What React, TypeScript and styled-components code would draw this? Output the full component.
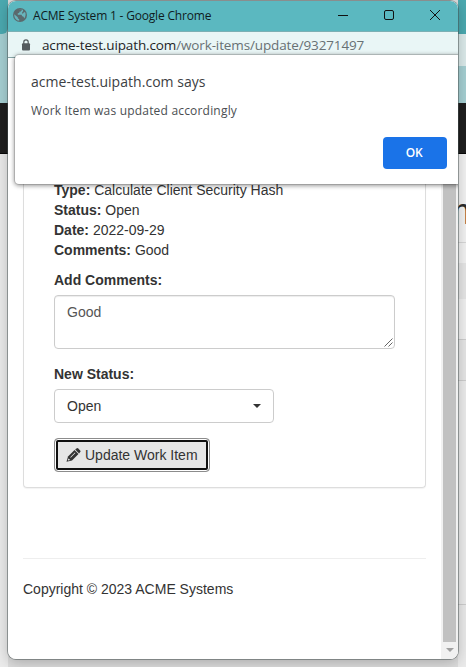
import React from "react";
import styled, { createGlobalStyle } from "styled-components";

const Global = createGlobalStyle`
  * { box-sizing: border-box; }
  body { margin: 0; overflow: hidden; }
`;

const Desktop = styled.div`
  position: relative;
  width: 466px;
  height: 667px;
  overflow: hidden;
  background: #a6d0d3;
`;

const Backdrop = styled.div`
  height: 667px;
  display: grid;
  grid-template-columns: 8px 1fr 8px;
`;

const Strip = styled.div`
  display: flex;
  flex-direction: column;
  overflow: hidden;
`;

const Band = styled.div<{ $h: number; $bg: string; $line?: string; $round?: boolean }>`
  flex: none;
  height: ${(p) => p.$h}px;
  background: ${(p) => p.$bg};
  border-bottom: ${(p) => (p.$line ? `1px solid ${p.$line}` : "none")};
  border-bottom-right-radius: ${(p) => (p.$round ? 6 : 0)}px;
`;

const HeadingBand = styled(Band)`
  padding-top: 38px;
  overflow: hidden;
  font: 36px/40px "Liberation Sans", Arial, sans-serif;
  color: #2b2b2b;
  text-indent: -6px;
`;

const Window = styled.div`
  position: absolute;
  left: 8px;
  top: 1px;
  width: 450px;
  height: 658px;
  display: flex;
  flex-direction: column;
  overflow: hidden;
  border-radius: 8px;
  background: #fff;
`;

const WindowShadow = styled.div`
  position: absolute;
  left: 8px;
  top: 1px;
  width: 450px;
  height: 658px;
  border-radius: 8px;
  box-shadow: 0 0 0 1px rgba(70, 80, 80, 0.5), 0 3px 14px rgba(0, 0, 0, 0.24);
`;

const TitleBar = styled.div`
  flex: none;
  height: 31px;
  display: flex;
  align-items: center;
  padding: 0 17px 2px 5px;
  background: #5bb8c0;
  border-bottom: 1px solid #7cb0b4;
`;

const Title = styled.span`
  margin-left: 6px;
  padding-top: 1px;
  flex: 1;
  font: 12px/16px "Open Sans", "Segoe UI", sans-serif;
  letter-spacing: -0.19px;
  color: #101c1e;
  white-space: nowrap;
`;

const Controls = styled.div`
  display: flex;
  gap: 34px;
`;

const AddressBar = styled.div`
  flex: none;
  height: 26px;
  display: flex;
  align-items: center;
  padding-left: 13px;
  background: #e9f6f6;
  border-bottom: 1px solid #87a5a7;
`;

const Url = styled.span`
  margin-left: 11px;
  font: 13.5px/20px "Open Sans", "Segoe UI", sans-serif;
  letter-spacing: -0.13px;
  color: #1e2526;
  white-space: nowrap;
`;

const UrlPath = styled.span`
  color: #687174;
`;

const Viewport = styled.div`
  flex: 1;
  display: flex;
`;

const Page = styled.main`
  flex: 1;
  padding: 0 15px;
  font: 14px/20px "Liberation Sans", Arial, sans-serif;
  color: #333;
`;

const Panel = styled.section`
  height: 430px;
  padding: 122px 30px 0;
  border: 1px solid #ddd;
  border-top: none;
  border-radius: 0 0 4px 4px;
  box-shadow: 0 1px 1px rgba(0, 0, 0, 0.05);
`;

const Details = styled.div`
  margin-bottom: 10px;
`;

const Detail = styled.div`
  height: 20px;
  white-space: nowrap;
`;

const Label = styled.label`
  display: block;
  margin-bottom: 5px;
  font-weight: bold;
`;

const Comment = styled.div`
  display: flex;
  width: 341px;
  height: 54px;
  margin-bottom: 15px;
  padding: 6px 12px;
  border: 1px solid #ccc;
  border-radius: 4px;
  box-shadow: inset 0 1px 1px rgba(0, 0, 0, 0.075);
  color: #555;
`;

const Grip = styled.svg`
  margin: auto -11px -5px auto;
`;

const Select = styled.div`
  display: flex;
  align-items: center;
  justify-content: space-between;
  width: 220px;
  height: 34px;
  margin-bottom: 15px;
  padding: 0 12px;
  border: 1px solid #ccc;
  border-radius: 4px;
`;

const Caret = styled.span`
  border: 4px solid transparent;
  border-top-color: #333;
  border-bottom: none;
`;

const UpdateButton = styled.button`
  display: flex;
  align-items: center;
  width: 156px;
  height: 34px;
  padding: 0 0 0 11px;
  border: 1px solid #8c8c8c;
  border-radius: 4px;
  background: #e6e6e6;
  box-shadow: inset 0 0 0 1px #fff, inset 0 0 0 3px #101010;
  color: #333;
  font: inherit;
  white-space: nowrap;
`;

const ButtonText = styled.span`
  margin-left: 4px;
`;

const Footer = styled.footer`
  margin-top: 70px;
  padding-top: 20px;
  border-top: 1px solid #eee;
`;

const Scrollbar = styled.div`
  width: 17px;
  display: flex;
  flex-direction: column;
  align-items: center;
  background: #f1f1f1;
`;

const Thumb = styled.div`
  width: 13px;
  height: 584px;
  background: #c1c1c1;
`;

const ScrollArrow = styled.span`
  margin-top: 6px;
  border: 4px solid transparent;
  border-top-color: #a0a0a0;
  border-bottom: none;
`;

const Dialog = styled.div`
  position: absolute;
  left: 7px;
  top: 54px;
  width: 448px;
  height: 129px;
  display: flex;
  flex-direction: column;
  padding: 17px 16px 15px;
  border-radius: 4px;
  background: #fff;
  box-shadow: 0 0 0 1px rgba(0, 0, 0, 0.12), 0 1px 4px 1px rgba(0, 0, 0, 0.38);
  white-space: nowrap;
`;

const DialogTitle = styled.div`
  font: 14px/20px "Open Sans", "Segoe UI", sans-serif;
  letter-spacing: 0.04px;
  color: #3c4043;
`;

const DialogText = styled.div`
  margin-top: 10px;
  font: 12px/18px "Open Sans", "Segoe UI", sans-serif;
  letter-spacing: 0.19px;
  color: #4a4e52;
`;

const OkButton = styled.button`
  width: 64px;
  height: 32px;
  margin: auto 0 0 352px;
  padding: 0 2px 0 0;
  border: none;
  border-radius: 4px;
  background: #1a73e8;
  color: #fff;
  font: 600 12px/30px "Open Sans", "Segoe UI", sans-serif;
  letter-spacing: -0.3px;
`;

const details = [
  ["Type:", "Calculate Client Security Hash"],
  ["Status:", "Open"],
  ["Date:", "2022-09-29"],
  ["Comments:", "Good"],
];

const Globe = () => (
  <svg width="14" height="14" viewBox="0 0 14 14">
    <circle cx="7" cy="7" r="7" fill="#5a6a6e" />
    <path
      d="M1.2 6.2 4.8 9.2V10.2L6.2 11.3V12.8C3.2 12.4 1.2 10 1.2 6.2ZM5.2 1.5 8.8 1.4V2.2L7.8 3.5 6.3 3.7V5L4.8 5.3V6.8H8.5L9.3 8.3 10.6 8.7 11.2 10.5C12.6 8.8 13.2 6 12 4L10.8 4.5 9.8 5.8 8.8 5 10 3.2V1.8Z"
      fill="#68b4bc"
    />
  </svg>
);

const Lock = () => (
  <svg width="10" height="12" viewBox="0 0 10 12">
    <rect x="1" y="4.2" width="8" height="7.3" rx="1" fill="#555b5e" />
    <path d="M2.8 5V3a2.2 2.2 0 0 1 4.4 0v2" fill="none" stroke="#555b5e" strokeWidth="1.2" />
  </svg>
);

const Pencil = () => (
  <svg width="15" height="14" viewBox="0 0 15 14">
    <path d="M0.5 13.7 2 8.6 8.5 2.1 12.5 6.1 6 12.5Z" fill="#333" />
    <path d="M9.2 1.5 10.5.4Q11.4-.2 12.2.4L14.2 2.4Q14.9 3.2 14.2 4.1L13.1 5.4Z" fill="#333" />
    <path d="M2.6 10.4 4.1 11.9 2.2 12.5 1.8 12.1ZM4.2 9.2 8.9 4.5 9.4 5 4.7 9.7Z" fill="#e6e6e6" />
  </svg>
);

export default function App() {
  return (
    <Desktop>
      <Global />
      <Backdrop>
        <Strip>
          <Band $h={34} $bg="#4ba9b0" $round />
          <Band $h={69} $bg="#a6d0d3" />
          <Band $h={51} $bg="#1f1f1f" $line="#080808" />
          <Band $h={513} $bg="#ebebeb" />
        </Strip>
        <Strip>
          <Band $h={667} $bg="#dcdcdc" />
        </Strip>
        <Strip>
          <Band $h={34} $bg="#4ba9b0" />
          <Band $h={32} $bg="#dcebeb" />
          <Band $h={37} $bg="#a6d0d3" />
          <Band $h={51} $bg="#1f1f1f" $line="#080808" />
          <HeadingBand $h={89} $bg="#f3f3f3" $line="#d8d8d8">m</HeadingBand>
          <Band $h={20} $bg="#f3f3f3" />
          <Band $h={36} $bg="#e6e6e6" />
          <Band $h={41} $bg="#f1f1f1" $line="#cecece" />
          <Band $h={41} $bg="#e6e6e6" $line="#cecece" />
          <Band $h={224} $bg="#ececec" $line="#cecece" />
          <Band $h={62} $bg="#eaeaea" />
        </Strip>
      </Backdrop>
      <WindowShadow />
      <Window>
        <TitleBar>
          <Globe />
          <Title>ACME System 1 - Google Chrome</Title>
          <Controls>
            <svg width="12" height="12" viewBox="0 0 12 12">
              <path d="M1 6.5H11" stroke="#111" />
            </svg>
            <svg width="12" height="12" viewBox="0 0 12 12">
              <rect x="1.5" y="1.5" width="9" height="9" rx="1.5" fill="none" stroke="#111" />
            </svg>
            <svg width="12" height="12" viewBox="0 0 12 12">
              <path d="M1 1 11 11M11 1 1 11" stroke="#111" />
            </svg>
          </Controls>
        </TitleBar>
        <AddressBar>
          <Lock />
          <Url>
            acme-test.uipath.com<UrlPath>/work-items/update/93271497</UrlPath>
          </Url>
        </AddressBar>
        <Viewport>
          <Page>
            <Panel>
              <Details>
                {details.map(([name, value]) => (
                  <Detail key={name}>
                    <b>{name}</b> {value}
                  </Detail>
                ))}
              </Details>
              <Label>Add Comments:</Label>
              <Comment>
                Good
                <Grip width="9" height="9" viewBox="0 0 9 9">
                  <path d="M.5 8.5 8.5.5M4.5 8.5 8.5 4.5" stroke="#666" />
                </Grip>
              </Comment>
              <Label>New Status:</Label>
              <Select>
                Open
                <Caret />
              </Select>
              <UpdateButton>
                <Pencil />
                <ButtonText>Update Work Item</ButtonText>
              </UpdateButton>
            </Panel>
            <Footer>Copyright © 2023 ACME Systems</Footer>
          </Page>
          <Scrollbar>
            <Thumb />
            <ScrollArrow />
          </Scrollbar>
        </Viewport>
        <Dialog>
          <DialogTitle>acme-test.uipath.com says</DialogTitle>
          <DialogText>Work Item was updated accordingly</DialogText>
          <OkButton>OK</OkButton>
        </Dialog>
      </Window>
    </Desktop>
  );
}
